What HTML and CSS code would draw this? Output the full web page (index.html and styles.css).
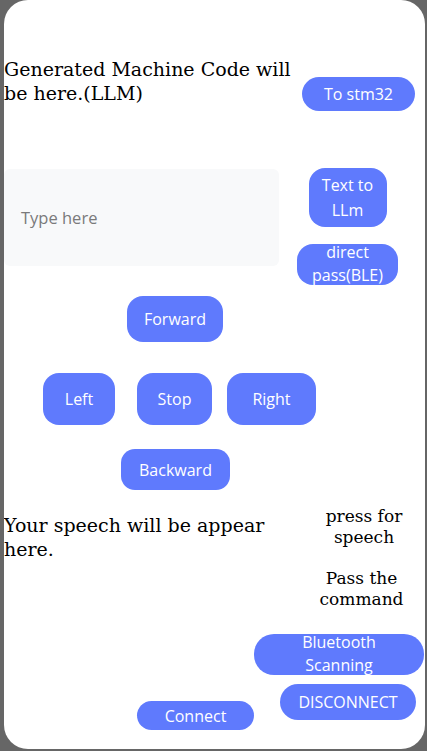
FILE: index.html
```html
<!DOCTYPE html>
<html>
<head>
<meta charset="utf-8">
<link rel="stylesheet" href="styles.css">
</head>
<body>
<div class="card">
  <div class="row-top">
    <div class="code-text">Generated Machine Code will be here.(LLM)</div>
    <div class="btn btn-stm">To stm32</div>
  </div>
  <div class="row-input">
    <div class="input">Type here</div>
    <div class="side-col">
      <div class="btn btn-llm">Text to LLm</div>
      <div class="btn btn-direct"><span class="btn-label">direct pass(BLE)</span></div>
    </div>
  </div>
  <div class="row-fwd">
    <div class="btn btn-fwd">Forward</div>
  </div>
  <div class="row-mid">
    <div class="btn btn-left">Left</div>
    <div class="btn btn-stop">Stop</div>
    <div class="btn btn-right">Right</div>
  </div>
  <div class="row-back">
    <div class="btn btn-back">Backward</div>
  </div>
  <div class="row-speech">
    <div class="speech-text">Your speech will be appear here.</div>
    <div class="speech-col">
      <div class="label label-press">press for speech</div>
      <div class="label label-pass">Pass the command</div>
    </div>
  </div>
  <div class="row-bt">
    <div class="btn btn-bt"><span class="btn-label">Bluetooth Scanning</span></div>
  </div>
  <div class="row-conn">
    <div class="btn btn-conn">Connect</div>
    <div class="btn btn-disc">DISCONNECT</div>
  </div>
</div>
</body>
</html>
```
FILE: styles.css
```css
html, body {
  margin: 0;
  padding: 0;
  background: #666666;
  overflow: hidden;
}
.card {
  margin-left: 4px;
  width: 421px;
  height: 749px;
  background: #ffffff;
  border-radius: 24px;
  overflow: hidden;
}
.btn {
  box-sizing: border-box;
  background: #5f7afd;
  color: #ffffff;
  font-family: "Open Sans", "Noto Sans", sans-serif;
  font-size: 16px;
  line-height: 24px;
  text-align: center;
  display: flex;
  align-items: center;
  justify-content: center;
  overflow: hidden;
}
.btn-label {
  display: block;
  margin-top: -3px;
  line-height: 23px;
}
.row-top {
  display: flex;
  padding-top: 57px;
}
.code-text {
  width: 293px;
  margin-right: 5px;
  font-family: "DejaVu Serif", serif;
  font-size: 19px;
  line-height: 24px;
  color: #000;
}
.btn-stm {
  margin-top: 20px;
  width: 113px;
  height: 34px;
  border-radius: 17px;
}
.row-input {
  display: flex;
  margin-top: 57px;
}
.input {
  box-sizing: border-box;
  margin-top: 1px;
  width: 275px;
  height: 97px;
  background: #f8f9fa;
  border-radius: 6px;
  padding-left: 17px;
  display: flex;
  align-items: center;
  font-family: "Open Sans", "Noto Sans", sans-serif;
  font-size: 16.5px;
  color: #7a7a7a;
}
.side-col {
  width: 137px;
  display: flex;
  flex-direction: column;
  align-items: center;
}
.btn-llm {
  width: 78px;
  height: 59px;
  border-radius: 16px;
  line-height: 25px;
}
.btn-direct {
  margin-top: 17px;
  width: 101px;
  height: 41px;
  border-radius: 16px;
  align-items: flex-start;
}
.row-fwd {
  display: flex;
  margin-top: 11px;
}
.btn-fwd {
  margin-left: 123px;
  width: 96px;
  height: 46px;
  border-radius: 16px;
}
.row-mid {
  display: flex;
  margin-top: 31px;
}
.btn-left {
  margin-left: 39px;
  width: 72px;
  height: 52px;
  border-radius: 16px;
}
.btn-stop {
  margin-left: 22px;
  width: 75px;
  height: 52px;
  border-radius: 16px;
}
.btn-right {
  margin-left: 15px;
  width: 89px;
  height: 52px;
  border-radius: 16px;
}
.row-back {
  display: flex;
  margin-top: 24px;
}
.btn-back {
  margin-left: 117px;
  width: 109px;
  height: 41px;
  border-radius: 14px;
}
.row-speech {
  display: flex;
  margin-top: 16px;
}
.speech-text {
  width: 299px;
  margin-top: 7px;
  font-family: "DejaVu Serif", serif;
  font-size: 19px;
  line-height: 24px;
  color: #000;
}
.speech-col {
  width: 120px;
  display: flex;
  flex-direction: column;
  align-items: center;
}
.label {
  font-family: "DejaVu Serif", serif;
  font-size: 17px;
  line-height: 21px;
  color: #000;
  text-align: center;
}
.label-press {
  width: 100px;
  margin-left: 2px;
}
.label-pass {
  width: 100px;
  margin-top: 20px;
  margin-right: 3px;
}
.row-bt {
  display: flex;
  margin-top: 24px;
}
.btn-bt {
  margin-left: 250px;
  width: 170px;
  height: 41px;
  border-radius: 20px;
  align-items: flex-start;
  padding: 0 30px;
}
.row-conn {
  display: flex;
  align-items: flex-start;
  margin-top: 9px;
}
.btn-conn {
  margin-left: 133px;
  margin-top: 17px;
  width: 117px;
  height: 29px;
  border-radius: 15px;
}
.btn-disc {
  margin-left: 26px;
  width: 136px;
  height: 36px;
  border-radius: 18px;
}
```
